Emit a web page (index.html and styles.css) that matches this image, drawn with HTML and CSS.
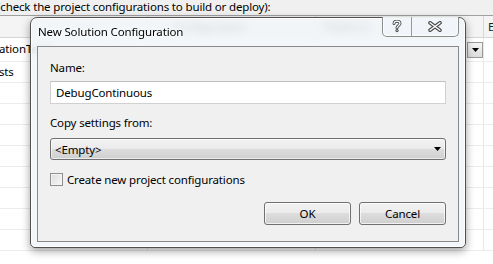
FILE: index.html
```html
<!DOCTYPE html>
<html>
<head>
<meta charset="utf-8">
<link rel="stylesheet" href="styles.css">
</head>
<body>
<div class="hint">(check the project configurations to build or deploy):</div>
<div class="grid">
  <div class="row head">
    <div class="cell c1"></div>
    <div class="cell c2">Configuration</div>
    <div class="cell c3">Platform</div>
    <div class="cell c4">E</div>
  </div>
  <div class="row first">
    <div class="cell c1"><span class="clip">ationTests</span></div>
    <div class="cell c2"></div>
    <div class="cell c3"><span class="ddbtn"><svg width="7" height="4" viewBox="0 0 7 4"><polygon points="0,0 7,0 3.5,4" fill="#000"/></svg></span></div>
    <div class="cell c4"></div>
  </div>
  <div class="row"><div class="cell c1"><span class="clip">sts</span></div><div class="cell c2"></div><div class="cell c3"></div><div class="cell c4"></div></div>
  <div class="row"><div class="cell c1"></div><div class="cell c2"></div><div class="cell c3"></div><div class="cell c4"></div></div>
  <div class="row"><div class="cell c1"></div><div class="cell c2"></div><div class="cell c3"></div><div class="cell c4"></div></div>
  <div class="row"><div class="cell c1"></div><div class="cell c2"></div><div class="cell c3"></div><div class="cell c4"></div></div>
  <div class="row"><div class="cell c1"></div><div class="cell c2"></div><div class="cell c3"></div><div class="cell c4"></div></div>
  <div class="row"><div class="cell c1"></div><div class="cell c2"></div><div class="cell c3"></div><div class="cell c4"></div></div>
  <div class="row"><div class="cell c1"></div><div class="cell c2"></div><div class="cell c3"></div><div class="cell c4"></div></div>
  <div class="row"><div class="cell c1"></div><div class="cell c2"></div><div class="cell c3"></div><div class="cell c4"></div></div>
  <div class="row"><div class="cell c1"></div><div class="cell c2"></div><div class="cell c3"></div><div class="cell c4"></div></div>
</div>

<div class="dialog">
  <div class="titlebar">
    <span class="title">New Solution Configuration</span>
    <div class="capbtns">
      <div class="capbtn help">
        <svg width="10" height="13" viewBox="0 0 10 13">
          <path d="M2 3.6 C2 2 3.3 1.2 5 1.2 C6.8 1.2 8 2.2 8 3.6 C8 5.4 5 5.6 5 7.8" fill="none" stroke="#4a4a4a" stroke-width="3" stroke-linecap="round"/>
          <circle cx="5" cy="10.6" r="1.6" fill="#4a4a4a"/>
          <path d="M2 3.6 C2 2 3.3 1.2 5 1.2 C6.8 1.2 8 2.2 8 3.6 C8 5.4 5 5.6 5 7.8" fill="none" stroke="#fff" stroke-width="1.2" stroke-linecap="round"/>
          <circle cx="5" cy="10.6" r="0.6" fill="#fff"/>
        </svg>
      </div>
      <div class="capbtn close">
        <svg width="14" height="11" viewBox="0 0 14 11">
          <path d="M2 1.8 L12 9.2 M12 1.8 L2 9.2" fill="none" stroke="#4a4a4a" stroke-width="3.6" stroke-linecap="round"/>
          <path d="M2 1.8 L12 9.2 M12 1.8 L2 9.2" fill="none" stroke="#fff" stroke-width="1.4" stroke-linecap="round"/>
        </svg>
      </div>
    </div>
  </div>
  <div class="client">
    <div class="lbl">Name:</div>
    <div class="input">DebugContinuous</div>
    <div class="lbl copy">Copy settings from:</div>
    <div class="combo">
      <span>&lt;Empty&gt;</span>
      <svg width="7" height="4" viewBox="0 0 7 4"><polygon points="0,0 7,0 3.5,4" fill="#000"/></svg>
    </div>
    <div class="check"><span class="box"></span><span>Create new project configurations</span></div>
    <div class="buttons">
      <div class="btn">OK</div>
      <div class="btn">Cancel</div>
    </div>
  </div>
</div>
</body>
</html>
```

FILE: styles.css
```css
* { box-sizing: border-box; }
html, body { margin: 0; padding: 0; }
body {
  width: 493px;
  height: 264px;
  overflow: hidden;
  position: relative;
  background: #fff;
  font-family: "Noto Sans", "Open Sans", sans-serif;
  font-size: 11.5px;
  letter-spacing: -0.15px;
  color: #000;
}

.hint {
  height: 16px;
  background: #f0f0f0;
  border-bottom: 1px solid #a0a0a0;
  line-height: 13px;
  text-indent: -3px;
  white-space: nowrap;
  overflow: hidden;
}

.row {
  display: grid;
  grid-template-columns: 148px 168px 168px 1fr;
  height: 21px;
  border-bottom: 1px solid #ececec;
}
.row.head {
  height: 22px;
  background: #f4f4f4;
  border-bottom: 1px solid #d5d5d5;
}
.row.first { height: 24px; }

.cell {
  border-right: 1px solid #dfe8f5;
  overflow: hidden;
  white-space: nowrap;
  line-height: 20px;
  position: relative;
}
.head .cell { border-right: 1px solid #d8d8d8; line-height: 21px; color: #222; }
.head .c2 { padding-left: 26px; }
.head .c3 { padding-left: 8px; }
.head .c4 { padding-left: 4px; }
.cell.c4 { border-right: none; }
.first .cell { line-height: 22px; }
.clip { margin-left: -1px; }

.c3 { display: flex; justify-content: flex-end; align-items: center; }
.head .c3 { justify-content: flex-start; }
.ddbtn {
  width: 16px;
  height: 16px;
  border: 1px solid #9a9a9a;
  background: linear-gradient(#f6f6f6, #dcdcdc);
  display: flex;
  align-items: center;
  justify-content: center;
}

.dialog {
  position: absolute;
  left: 30px;
  top: 17px;
  width: 436px;
  height: 231px;
  border: 1px solid #505050;
  border-radius: 7px 7px 5px 5px;
  background: rgba(240, 245, 249, 0.82);
  backdrop-filter: blur(4px);
  box-shadow: 0 3px 9px rgba(0, 0, 0, 0.38), inset 0 0 0 1px rgba(255, 255, 255, 0.8);
  padding: 0 6px 5px 6px;
  display: flex;
  flex-direction: column;
}

.titlebar {
  height: 28px;
  display: flex;
  align-items: flex-start;
  flex: none;
}
.title {
  padding-left: 1px;
  line-height: 28px;
  text-shadow: 0 0 6px #fff, 0 0 3px #fff;
}
.capbtns {
  margin-left: auto;
  margin-top: -1px;
  height: 20px;
  display: flex;
  border: 1px solid #8c8c8c;
  border-top: none;
  border-radius: 0 0 5px 5px;
  background: rgba(240, 244, 248, 0.7);
  box-shadow: inset 0 0 0 1px rgba(255, 255, 255, 0.7);
}
.capbtn {
  display: flex;
  align-items: center;
  justify-content: center;
}
.capbtn.help { width: 29px; border-right: 1px solid #9a9a9a; }
.capbtn.close { width: 46px; }

.client {
  flex: 1;
  border: 1px solid #8a8a8a;
  background: #f0f0f0;
  padding: 13px 12px 0 12px;
  display: flex;
  flex-direction: column;
}
.lbl { line-height: 16px; }
.input {
  margin-top: 5px;
  height: 23px;
  border: 1px solid #d0d0d0;
  border-top-color: #c0c0c0;
  background: #fff;
  padding-left: 5px;
  line-height: 21px;
}
.lbl.copy { margin-top: 11px; }
.combo {
  margin-top: 7px;
  height: 22px;
  border: 1px solid #707070;
  border-radius: 3px;
  background: linear-gradient(#f2f2f2 0%, #ebebeb 48%, #dddddd 50%, #cfcfcf 100%);
  display: flex;
  align-items: center;
  justify-content: space-between;
  padding: 0 4px 0 4px;
  box-shadow: inset 0 0 0 1px rgba(255, 255, 255, 0.6);
}
.check {
  margin-top: 11px;
  height: 16px;
  display: flex;
  align-items: center;
  gap: 4px;
}
.box {
  width: 13px;
  height: 13px;
  border: 1px solid #8e8f8f;
  background: linear-gradient(135deg, #dcdcdc, #f8f8f8);
  box-shadow: inset 0 0 0 1px #f4f4f4;
}
.buttons {
  margin-top: 15px;
  display: flex;
  justify-content: flex-end;
  gap: 8px;
}
.btn {
  width: 87px;
  height: 23px;
  border: 1px solid #707070;
  border-radius: 3px;
  background: linear-gradient(#f2f2f2 0%, #ebebeb 48%, #dddddd 50%, #cfcfcf 100%);
  box-shadow: inset 0 0 0 1px rgba(255, 255, 255, 0.7);
  text-align: center;
  line-height: 21px;
}
```
